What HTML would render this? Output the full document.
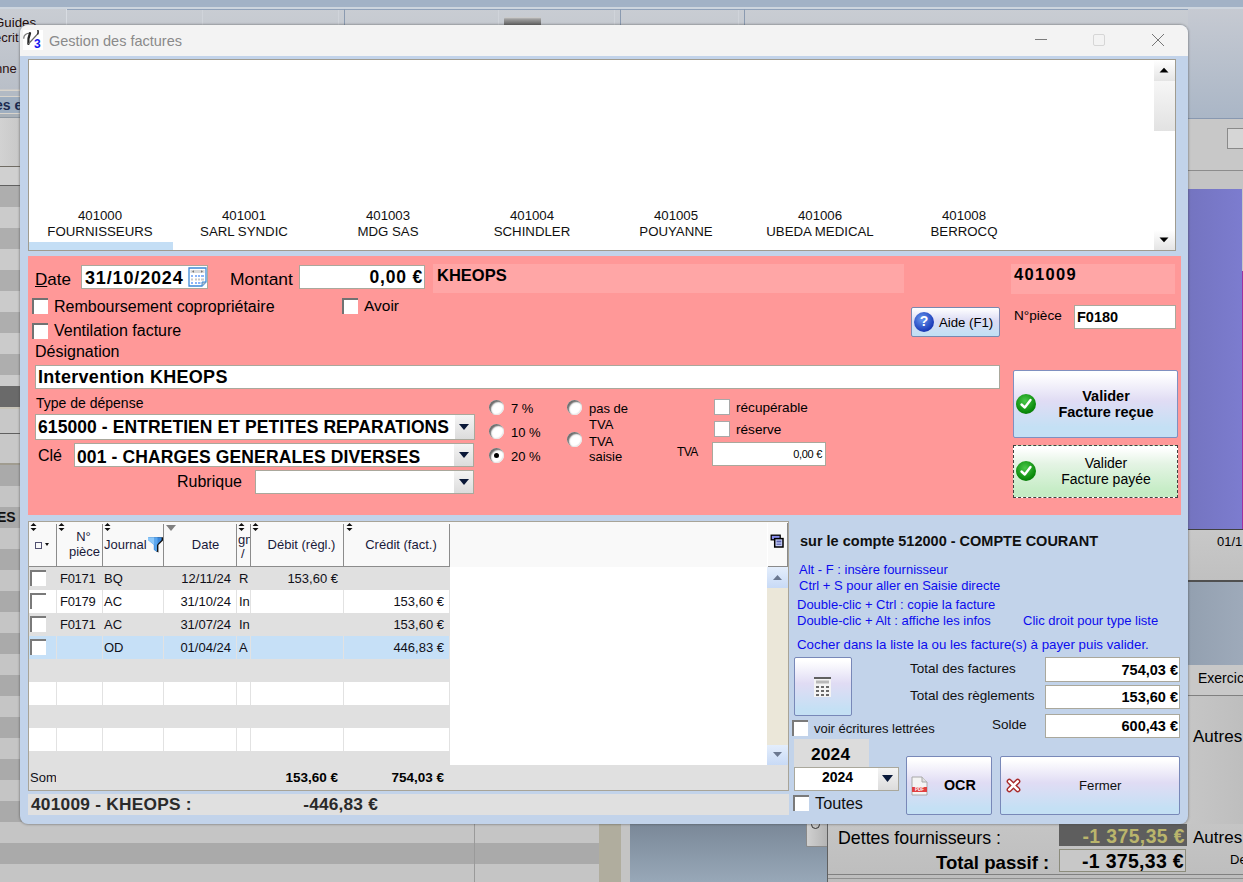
<!DOCTYPE html>
<html><head><meta charset="utf-8">
<style>
*{box-sizing:border-box;margin:0;padding:0}
html,body{width:1243px;height:882px;overflow:hidden;background:#c8c8c8;font-family:"Liberation Sans",sans-serif;color:#000}
.a{position:absolute}
.t{position:absolute;white-space:nowrap;line-height:1}
</style></head><body>
<!-- ===== BACKGROUND ===== -->
<div id="bg">
  <!-- top band -->
  <div class="a" style="left:0;top:0;width:1243px;height:7px;background:#a2b2c6"></div>
  <div class="a" style="left:0;top:7px;width:1243px;height:2px;background:#cdd5de"></div>
  <div class="a" style="left:0;top:9px;width:1243px;height:80px;background:linear-gradient(#c9cdd3,#b9bfc8)"></div>
  <!-- toolbar separators -->
  <div class="a" style="left:66px;top:9px;width:1177px;height:1px;background:#90a2ba"></div>
  <div class="a" style="left:66px;top:9px;width:1px;height:16px;background:#d8dce2"></div>
  <div class="a" style="left:202px;top:10px;width:1px;height:15px;background:#d0d4da"></div>
  <div class="a" style="left:338px;top:10px;width:1px;height:15px;background:#d0d4da"></div>
  <div class="a" style="left:344px;top:9px;width:1px;height:16px;background:#8a9ab0"></div>
  <div class="a" style="left:498px;top:10px;width:1px;height:15px;background:#d0d4da"></div>
  <div class="a" style="left:614px;top:10px;width:1px;height:15px;background:#d0d4da"></div>
  <div class="a" style="left:620px;top:9px;width:1px;height:16px;background:#8a9ab0"></div>
  <div class="a" style="left:738px;top:10px;width:1px;height:15px;background:#d0d4da"></div>
  <div class="a" style="left:744px;top:9px;width:1px;height:16px;background:#8a9ab0"></div>
  <div class="a" style="left:504px;top:17px;width:37px;height:9px;background:linear-gradient(#d8d8d8 0,#a0a0a0 2px,#7c7c7c 60%,#606060);border-radius:2px 1px 0 0"></div>
  <!-- left strip -->
  <div class="t" style="left:-6px;top:16px;font-size:13.3px;color:#200a0a">Guides</div>
  <div class="t" style="left:-6px;top:31px;font-size:13px;color:#2a1010">écrit</div>
  <div class="t" style="left:-5px;top:62px;font-size:13px;color:#2a1010">nne</div>
  <div class="a" style="left:0;top:90px;width:20px;height:1px;background:#d8d4cc"></div>
  <div class="a" style="left:0;top:91px;width:20px;height:5px;background:#b2bac4"></div>
  <div class="a" style="left:0;top:96px;width:20px;height:1px;background:#d8d4cc"></div>
  <div class="a" style="left:0;top:97px;width:20px;height:16px;background:#9eaec0"></div>
  <div class="t" style="left:-5px;top:98px;font-size:14px;font-weight:bold;color:#1a2a50">es e</div>
  <div class="a" style="left:0;top:113px;width:20px;height:1px;background:#d8d4cc"></div>
  <div class="a" style="left:0;top:114px;width:20px;height:3px;background:#a8b0b8"></div>
  <div class="a" style="left:0;top:117px;width:20px;height:1px;background:#8e98a2"></div>
  <div class="a" style="left:0;top:118px;width:20px;height:48px;background:linear-gradient(90deg,#d2d2d2,#c8c8c8)"></div>
  <div class="a" style="left:0;top:166px;width:20px;height:1px;background:#706c64"></div>
  <div class="a" style="left:0;top:167px;width:20px;height:18px;background:#d0d0d0"></div>
  <div class="a" style="left:0;top:185px;width:20px;height:1px;background:#606060"></div>
  <div id="stripesL" class="a" style="left:0;top:186px;width:20px;height:200px;background:repeating-linear-gradient(#aeaeae 0 21px,#cbcbcb 21px 42px)"></div>
  <div class="a" style="left:0;top:386px;width:20px;height:21px;background:#6a6a6a"></div>
  <div class="a" style="left:0;top:407px;width:20px;height:2px;background:#c8c4b8"></div>
  <div class="a" style="left:0;top:409px;width:20px;height:24px;background:#c8c8c8"></div>
  <div class="a" style="left:0;top:433px;width:20px;height:1px;background:#606060"></div>
  <div class="a" style="left:0;top:434px;width:20px;height:29px;background:#c8c8c8"></div>
  <div class="a" style="left:0;top:463px;width:20px;height:2px;background:#a09c90"></div>
  <div class="a" style="left:0;top:465px;width:600px;height:417px;background:repeating-linear-gradient(#aaaaaa 0 21px,#c5c5c5 21px 42px)"></div>
  <div class="t" style="left:-3px;top:510px;font-size:14px;font-weight:bold;color:#101010">ES</div>
  <div class="a" style="left:474px;top:824px;width:1px;height:58px;background:#9a9a9a"></div>
  <div class="a" style="left:599px;top:824px;width:22px;height:58px;background:#b0ad9e"></div>
  <div class="a" style="left:621px;top:824px;width:9px;height:58px;background:#c4c4c4"></div>
  <div class="a" style="left:630px;top:824px;width:197px;height:58px;background:linear-gradient(#7a8898,#98a8b8)"></div>
  <div class="a" style="left:806px;top:812px;width:21px;height:35px;background:linear-gradient(90deg,#d0d0d0,#b4b4b4);border-left:1px solid #8a8a8a;border-bottom:1px solid #8a8a8a;border-radius:0 0 0 2px"></div>
  <div class="a" style="left:811px;top:820px;width:9px;height:9px;border:1.3px solid #303030;border-radius:50%"></div>
  <div class="a" style="left:827px;top:815px;width:416px;height:67px;background:linear-gradient(#c6c6c6,#bdbdbd);border-left:1px solid #606060"></div>
  <div class="t" style="left:838px;top:829.5px;font-size:17.8px">Dettes fournisseurs :</div>
  <div class="t" style="left:936px;top:854px;font-size:18.6px;font-weight:bold">Total passif :</div>
  <div class="a" style="left:1059px;top:824px;width:128px;height:22px;background:#5e5e5e"></div>
  <div class="t" style="left:1059px;top:826.5px;width:126px;text-align:right;font-size:19.3px;font-weight:bold;letter-spacing:0.45px;color:#bab56c">-1 375,35 €</div>
  <div class="a" style="left:1059px;top:849px;width:127px;height:23px;border:1px solid #8c8c7c;background:#c8c8c8"></div>
  <div class="t" style="left:1059px;top:852px;width:125px;text-align:right;font-size:19.5px;font-weight:bold;letter-spacing:0.3px">-1 375,33 €</div>
  <div class="a" style="left:828px;top:874px;width:415px;height:1px;background:#808080"></div>
  <div class="a" style="left:828px;top:878px;width:415px;height:1px;background:#909090"></div>
  <div class="t" style="left:1193px;top:829px;font-size:17px">Autres</div>
  <div class="t" style="left:1230px;top:853px;font-size:13px">De</div>
  <!-- right strip -->
  <div class="a" style="left:1188px;top:9px;width:55px;height:109px;background:linear-gradient(#c6cad2,#aab6c6)"></div>
  <div class="a" style="left:1188px;top:118px;width:55px;height:1px;background:#8898b0"></div>
  <div class="a" style="left:1188px;top:119px;width:55px;height:51px;background:#c8c8c8"></div>
  <div class="a" style="left:1227px;top:128px;width:20px;height:21px;background:#d6d6d6;border:1px solid #8a8a8a"></div>
  <div class="a" style="left:1188px;top:170px;width:55px;height:1px;background:#8c8c8c"></div>
  <div class="a" style="left:1188px;top:171px;width:55px;height:18px;background:#c4c4c4"></div>
  <div class="a" style="left:1188px;top:189px;width:54px;height:340px;background:linear-gradient(90deg,#7474c0,#7c7ccf)"></div>
  <div class="a" style="left:1242px;top:271px;width:1px;height:258px;background:#a030a0"></div>
  <div class="a" style="left:1188px;top:529px;width:55px;height:1px;background:#404040"></div>
  <div class="a" style="left:1188px;top:530px;width:55px;height:51px;background:linear-gradient(#c8c8c8,#c0c0c0)"></div>
  <div class="t" style="left:1217px;top:535px;font-size:13px">01/1</div>
  <div class="a" style="left:1188px;top:580px;width:55px;height:2px;background:#505050"></div>
  <div class="a" style="left:1188px;top:582px;width:55px;height:83px;background:linear-gradient(90deg,#93a0b0,#9eaaba)"></div>
  <div class="a" style="left:1188px;top:665px;width:55px;height:30px;background:#c8c8c8"></div>
  <div class="t" style="left:1198px;top:671px;font-size:14px">Exercic</div>
  <div class="a" style="left:1188px;top:695px;width:55px;height:1px;background:#808080"></div>
  <div class="a" style="left:1188px;top:696px;width:55px;height:128px;background:linear-gradient(90deg,#c6c6c6,#bebebe)"></div>
  <div class="t" style="left:1193px;top:728px;font-size:17px">Autres</div>
</div>

<!-- ===== WINDOW ===== -->
<div id="win" class="a" style="left:20px;top:25px;width:1168px;height:799px;background:#c2d3ea;border-radius:8px;overflow:hidden;box-shadow:0 0 2px 1px rgba(60,60,60,.35)">
<div class="a" style="left:-20px;top:-25px;width:1243px;height:882px">
  <!-- title bar -->
  <div class="a" style="left:20px;top:25px;width:1168px;height:31px;background:#f3f3f3"></div>
  <div class="a" style="left:23px;top:30px;width:20px;height:20px;background:#fff"></div>
  <svg class="a" style="left:23px;top:30px" width="20" height="20" viewBox="0 0 20 20">
    <path d="M0.8 8.2C0.6 5.5 3.5 3 7 3.2" fill="none" stroke="#7a7a7a" stroke-width="1.3" stroke-linecap="round"/>
    <path d="M7 3.3C5.6 6.5 5 10 5.4 13.8" fill="none" stroke="#262626" stroke-width="2.3" stroke-linecap="round"/>
    <path d="M5.6 13.6C8.5 10.5 12.5 6.5 14.8 3.6" fill="none" stroke="#6a6a6a" stroke-width="1.3" stroke-linecap="round"/>
    <path d="M14.8 3.8C15.3 2.5 15.1 1.2 14.9 0.6" fill="none" stroke="#3a3a3a" stroke-width="1.7" stroke-linecap="round"/>
    <text x="11.1" y="17.7" font-family="Liberation Sans" font-weight="bold" font-size="12" fill="#1414f0">3</text>
  </svg>
  <div class="t" style="left:49px;top:34px;font-size:14.5px;color:#8a8a8a">Gestion des factures</div>
  <div class="a" style="left:1035px;top:39px;width:12px;height:1px;background:#7c7c7c"></div>
  <div class="a" style="left:1093px;top:34px;width:12px;height:12px;border:1px solid #d6d6d6;border-radius:2px"></div>
  <svg class="a" style="left:1151px;top:33px" width="14" height="14" viewBox="0 0 14 14"><path d="M1 1L13 13M13 1L1 13" stroke="#767676" stroke-width="1"/></svg>

  <!-- list view -->
  <div class="a" style="left:28px;top:59px;width:1148px;height:192px;background:#fff;border:1px solid #a09c90"></div>
  <div class="a" style="left:29px;top:242px;width:144px;height:8px;background:#c4def5"></div>
  <div id="items"><div class="t" style="left:28px;top:209px;width:144px;text-align:center;font-size:13.25px;color:#101010">401000</div><div class="t" style="left:28px;top:225px;width:144px;text-align:center;font-size:13.25px;color:#101010">FOURNISSEURS</div>
<div class="t" style="left:172px;top:209px;width:144px;text-align:center;font-size:13.25px;color:#101010">401001</div><div class="t" style="left:172px;top:225px;width:144px;text-align:center;font-size:13.25px;color:#101010">SARL SYNDIC</div>
<div class="t" style="left:316px;top:209px;width:144px;text-align:center;font-size:13.25px;color:#101010">401003</div><div class="t" style="left:316px;top:225px;width:144px;text-align:center;font-size:13.25px;color:#101010">MDG SAS</div>
<div class="t" style="left:460px;top:209px;width:144px;text-align:center;font-size:13.25px;color:#101010">401004</div><div class="t" style="left:460px;top:225px;width:144px;text-align:center;font-size:13.25px;color:#101010">SCHINDLER</div>
<div class="t" style="left:604px;top:209px;width:144px;text-align:center;font-size:13.25px;color:#101010">401005</div><div class="t" style="left:604px;top:225px;width:144px;text-align:center;font-size:13.25px;color:#101010">POUYANNE</div>
<div class="t" style="left:748px;top:209px;width:144px;text-align:center;font-size:13.25px;color:#101010">401006</div><div class="t" style="left:748px;top:225px;width:144px;text-align:center;font-size:13.25px;color:#101010">UBEDA MEDICAL</div>
<div class="t" style="left:892px;top:209px;width:144px;text-align:center;font-size:13.25px;color:#101010">401008</div><div class="t" style="left:892px;top:225px;width:144px;text-align:center;font-size:13.25px;color:#101010">BERROCQ</div>
</div>
  <!-- list scrollbar -->
  <div class="a" style="left:1154px;top:60px;width:21px;height:21px;background:linear-gradient(#fff,#e4e4e4)"></div>
  <svg class="a" style="left:1159px;top:67px" width="10" height="6" viewBox="0 0 10 6"><path d="M0.5 5.5L5 0.8L9.5 5.5Z" fill="#000"/></svg>
  <div class="a" style="left:1154px;top:81px;width:21px;height:50px;background:linear-gradient(#f6f6f6,#e2e2e2)"></div>
  <div class="a" style="left:1154px;top:230px;width:21px;height:20px;background:linear-gradient(#fff,#e4e4e4)"></div>
  <svg class="a" style="left:1159px;top:237px" width="10" height="6" viewBox="0 0 10 6"><path d="M0.5 0.5L5 5.2L9.5 0.5Z" fill="#000"/></svg>

  <!-- pink panel -->
  <div class="a" style="left:28px;top:256px;width:1153px;height:259px;background:#ff9898"></div>
  <div id="pink"><div class="t" style="left:35px;top:271px;font-size:17px;"><u>D</u>ate</div><div class="a" style="left:81px;top:265px;width:127px;height:24px;background:#fff;border:1px solid #aaa89c;"></div><div class="t" style="left:85px;top:269px;font-size:18px;font-weight:bold;letter-spacing:0.85px">31/10/2024</div><svg class="a" style="left:188px;top:267px" width="19" height="20" viewBox="0 0 19 20">
<path d="M1 1H18V15L14 19H1Z" fill="#fff" stroke="#3d8ad8" stroke-width="1.3"/>
<rect x="2.5" y="3" width="14" height="3" fill="#d8d8d8"/>
<path d="M4 4.5L6 3.2V5.8Z M15 4.5L13 3.2V5.8Z" fill="#777"/>
<g fill="#8ab4f8"><rect x="3" y="8" width="2" height="2"/><rect x="7" y="8" width="2" height="2"/><rect x="10" y="8" width="2" height="2"/><rect x="13" y="8" width="3" height="2"/>
<rect x="3" y="15" width="2" height="2"/><rect x="7" y="15" width="2" height="2"/><rect x="10" y="15" width="2.5" height="2"/></g>
<g fill="#c8c8c8"><rect x="3" y="11.5" width="2" height="2"/><rect x="7" y="11.5" width="2" height="2"/><rect x="10" y="11.5" width="2" height="2"/><rect x="13" y="11.5" width="3" height="2"/></g>
<path d="M14 19L14 15L18 15" fill="#c0c0c0" stroke="#3d8ad8" stroke-width="1"/>
</svg><div class="t" style="left:230px;top:271px;font-size:17.4px;">Montant</div><div class="a" style="left:299px;top:265px;width:126px;height:24px;background:#fff;border:1px solid #aaa89c;"></div><div class="t" style="left:299px;top:269px;font-size:17.5px;width:124px;text-align:right;font-weight:bold;letter-spacing:0.8px">0,00 €</div><div class="a" style="left:433px;top:264px;width:471px;height:29px;background:#ffa6a6"></div><div class="t" style="left:437px;top:267px;font-size:16.5px;font-weight:bold">KHEOPS</div><div class="a" style="left:1011px;top:264px;width:164px;height:30px;background:#ffa6a6"></div><div class="t" style="left:1014px;top:266px;font-size:16.5px;font-weight:bold;letter-spacing:1.3px">401009</div><div class="a" style="left:32px;top:298px;width:16px;height:16px;background:#fff;border-top:2px solid #707272;border-left:2px solid #707272"></div><div class="t" style="left:54px;top:299px;font-size:16px;">Remboursement copropriétaire</div><div class="a" style="left:342px;top:298px;width:16px;height:16px;background:#fff;border-top:2px solid #707272;border-left:2px solid #707272"></div><div class="t" style="left:364px;top:298px;font-size:15.5px;">Avoir</div><div class="a" style="left:32px;top:323px;width:16px;height:16px;background:#fff;border-top:2px solid #707272;border-left:2px solid #707272"></div><div class="t" style="left:54px;top:323px;font-size:16px;">Ventilation facture</div><div class="t" style="left:35px;top:344px;font-size:16px;">Désignation</div><div class="a" style="left:35px;top:365px;width:965px;height:24px;background:#fff;border:1px solid #aaa89c;"></div><div class="t" style="left:38px;top:368px;font-size:18px;font-weight:bold;letter-spacing:0.3px">Intervention KHEOPS</div><div class="a" style="left:911px;top:307px;width:89px;height:30px;border:1px solid #7888b0;border-radius:2px;background:linear-gradient(#ffffff,#dcdcf4 45%,#c0e0f4)"></div><div class="a" style="left:914px;top:312px;width:20px;height:20px;border-radius:50%;background:radial-gradient(circle at 40% 35%,#6a9af0,#1a3ab8 70%,#10288a)"></div><div class="t" style="left:914px;top:314px;font-size:14px;width:20px;text-align:center;font-weight:bold;color:#fff">?</div><div class="t" style="left:939px;top:316px;font-size:13.2px;">Aide (F1)</div><div class="t" style="left:1014px;top:309px;font-size:13.6px;">N°pièce</div><div class="a" style="left:1074px;top:305px;width:102px;height:24px;background:#fff;border:1px solid #aaa89c;"></div><div class="t" style="left:1077px;top:310px;font-size:14.5px;font-weight:bold">F0180</div><div class="a" style="left:1013px;top:370px;width:165px;height:68px;border:1px solid #8090c0;border-radius:2px;background:linear-gradient(#ffffff 5%,#e0dcf4 45%,#c4e0f4 85%)"></div><div class="a" style="left:1016px;top:394px;width:20px;height:20px;border-radius:50%;background:radial-gradient(circle at 45% 35%,#4ac84a,#0a8a0a 65%,#066006)"></div><svg class="a" style="left:1016px;top:394px" width="20" height="20" viewBox="0 0 20 20"><path d="M5.5 10.5L8.8 13.5L14.5 6" fill="none" stroke="#fff" stroke-width="2.4" stroke-linecap="round" stroke-linejoin="round"/></svg><div class="t" style="left:1013px;top:389px;font-size:14.5px;width:186px;text-align:center;font-weight:bold">Valider</div><div class="t" style="left:1013px;top:405px;font-size:14.5px;width:186px;text-align:center;font-weight:bold">Facture reçue</div><div class="a" style="left:1013px;top:445px;width:165px;height:53px;border:1px dashed #404040;background:linear-gradient(#ffffff 5%,#e4f4e4 35%,#c4ecc4 90%)"></div><div class="a" style="left:1016px;top:461px;width:20px;height:20px;border-radius:50%;background:radial-gradient(circle at 45% 35%,#4ac84a,#0a8a0a 65%,#066006)"></div><svg class="a" style="left:1016px;top:461px" width="20" height="20" viewBox="0 0 20 20"><path d="M5.5 10.5L8.8 13.5L14.5 6" fill="none" stroke="#fff" stroke-width="2.4" stroke-linecap="round" stroke-linejoin="round"/></svg><div class="t" style="left:1013px;top:456px;font-size:14px;width:186px;text-align:center">Valider</div><div class="t" style="left:1013px;top:472px;font-size:14px;width:186px;text-align:center">Facture payée</div><div class="t" style="left:36px;top:396px;font-size:14px;">Type de dépense</div><div class="a" style="left:35px;top:414px;width:440px;height:26px;background:#fff;border:1px solid #aaa89c;"></div><div class="a" style="left:455px;top:415px;width:19px;height:24px;background:linear-gradient(#f4f4f4,#dcdcdc)"></div><div class="a" style="left:459px;top:424px;width:0;height:0;border-left:5.5px solid transparent;border-right:5.5px solid transparent;border-top:6px solid #0a1838"></div><div class="t" style="left:38px;top:419px;font-size:17.5px;font-weight:bold;letter-spacing:0.08px">615000 - ENTRETIEN ET PETITES REPARATIONS</div><div class="t" style="left:38px;top:448px;font-size:16px;">Clé</div><div class="a" style="left:74px;top:443px;width:400px;height:24px;background:#fff;border:1px solid #aaa89c;"></div><div class="a" style="left:454px;top:444px;width:19px;height:22px;background:linear-gradient(#f4f4f4,#dcdcdc)"></div><div class="a" style="left:459px;top:452px;width:0;height:0;border-left:5.5px solid transparent;border-right:5.5px solid transparent;border-top:6px solid #0a1838"></div><div class="t" style="left:77px;top:449px;font-size:17.5px;font-weight:bold;letter-spacing:0.12px">001 - CHARGES GENERALES DIVERSES</div><div class="t" style="left:177px;top:474px;font-size:16px;">Rubrique</div><div class="a" style="left:255px;top:470px;width:219px;height:24px;background:#fff;border:1px solid #aaa89c;"></div><div class="a" style="left:454px;top:471px;width:19px;height:22px;background:linear-gradient(#f4f4f4,#dcdcdc)"></div><div class="a" style="left:459px;top:479px;width:0;height:0;border-left:5.5px solid transparent;border-right:5.5px solid transparent;border-top:6px solid #0a1838"></div><div class="a" style="left:489px;top:400px;width:15px;height:15px;border-radius:50%;background:#fff;box-shadow:inset 2px 2px 1.5px #6e6e6e,inset -1px -1px 1px #e8e8e8"></div><div class="t" style="left:511px;top:402px;font-size:13px;">7 %</div><div class="a" style="left:489px;top:424px;width:15px;height:15px;border-radius:50%;background:#fff;box-shadow:inset 2px 2px 1.5px #6e6e6e,inset -1px -1px 1px #e8e8e8"></div><div class="t" style="left:511px;top:426px;font-size:13px;">10 %</div><div class="a" style="left:489px;top:448px;width:15px;height:15px;border-radius:50%;background:#fff;box-shadow:inset 2px 2px 1.5px #6e6e6e,inset -1px -1px 1px #e8e8e8"></div><div class="a" style="left:494px;top:453px;width:5px;height:5px;border-radius:50%;background:#000"></div><div class="t" style="left:511px;top:450px;font-size:13px;">20 %</div><div class="a" style="left:567px;top:400px;width:15px;height:15px;border-radius:50%;background:#fff;box-shadow:inset 2px 2px 1.5px #6e6e6e,inset -1px -1px 1px #e8e8e8"></div><div class="t" style="left:589px;top:402px;font-size:13px;">pas de</div><div class="t" style="left:589px;top:418px;font-size:13px;">TVA</div><div class="a" style="left:567px;top:432px;width:15px;height:15px;border-radius:50%;background:#fff;box-shadow:inset 2px 2px 1.5px #6e6e6e,inset -1px -1px 1px #e8e8e8"></div><div class="t" style="left:589px;top:435px;font-size:13px;">TVA</div><div class="t" style="left:589px;top:450px;font-size:13px;">saisie</div><div class="a" style="left:714px;top:399px;width:16px;height:16px;background:#fff;border:1px solid #a8a8a8"></div><div class="t" style="left:736px;top:401px;font-size:13.6px;">récupérable</div><div class="a" style="left:714px;top:421px;width:16px;height:16px;background:#fff;border:1px solid #a8a8a8"></div><div class="t" style="left:736px;top:423px;font-size:13.6px;">réserve</div><div class="t" style="left:677px;top:446px;font-size:12px;letter-spacing:-0.6px">TVA</div><div class="a" style="left:712px;top:442px;width:114px;height:24px;background:#fff;border:1px solid #aaa89c;"></div><div class="t" style="left:712px;top:449px;font-size:11px;width:112px;text-align:right;padding-right:2px;letter-spacing:-0.3px">0,00 €</div></div>

  <!-- grid -->
  <div id="grid"><div class="a" style="left:28px;top:521px;width:761px;height:270px;background:#fff;border:1px solid #a8a498"></div><div class="a" style="left:29px;top:522px;width:759px;height:45px;background:#f9f9f9"></div><div class="a" style="left:29px;top:566px;width:28px;height:1px;background:#8c8c8c"></div><div class="a" style="left:56px;top:524px;width:1px;height:43px;background:#8c8c8c"></div><div class="a" style="left:57px;top:566px;width:46px;height:1px;background:#8c8c8c"></div><div class="a" style="left:102px;top:524px;width:1px;height:43px;background:#8c8c8c"></div><div class="a" style="left:103px;top:566px;width:61px;height:1px;background:#8c8c8c"></div><div class="a" style="left:163px;top:524px;width:1px;height:43px;background:#8c8c8c"></div><div class="a" style="left:164px;top:566px;width:73px;height:1px;background:#8c8c8c"></div><div class="a" style="left:236px;top:524px;width:1px;height:43px;background:#8c8c8c"></div><div class="a" style="left:237px;top:566px;width:14px;height:1px;background:#8c8c8c"></div><div class="a" style="left:250px;top:524px;width:1px;height:43px;background:#8c8c8c"></div><div class="a" style="left:251px;top:566px;width:93px;height:1px;background:#8c8c8c"></div><div class="a" style="left:343px;top:524px;width:1px;height:43px;background:#8c8c8c"></div><div class="a" style="left:344px;top:566px;width:106px;height:1px;background:#8c8c8c"></div><div class="a" style="left:449px;top:524px;width:1px;height:43px;background:#8c8c8c"></div><svg class="a" style="left:30px;top:523px" width="7" height="8" viewBox="0 0 7 8"><path d="M3.5 0L6.5 3H0.5Z M3.5 8L6.5 5H0.5Z" fill="#101010"/></svg><svg class="a" style="left:58px;top:523px" width="7" height="8" viewBox="0 0 7 8"><path d="M3.5 0L6.5 3H0.5Z M3.5 8L6.5 5H0.5Z" fill="#101010"/></svg><svg class="a" style="left:104px;top:523px" width="7" height="8" viewBox="0 0 7 8"><path d="M3.5 0L6.5 3H0.5Z M3.5 8L6.5 5H0.5Z" fill="#101010"/></svg><svg class="a" style="left:238px;top:523px" width="7" height="8" viewBox="0 0 7 8"><path d="M3.5 0L6.5 3H0.5Z M3.5 8L6.5 5H0.5Z" fill="#101010"/></svg><svg class="a" style="left:252px;top:523px" width="7" height="8" viewBox="0 0 7 8"><path d="M3.5 0L6.5 3H0.5Z M3.5 8L6.5 5H0.5Z" fill="#101010"/></svg><svg class="a" style="left:346px;top:523px" width="7" height="8" viewBox="0 0 7 8"><path d="M3.5 0L6.5 3H0.5Z M3.5 8L6.5 5H0.5Z" fill="#101010"/></svg><svg class="a" style="left:166px;top:525px" width="10" height="6" viewBox="0 0 10 6"><path d="M0 0H10L5 6Z" fill="#808080"/></svg><div class="a" style="left:35px;top:542px;width:7px;height:7px;border:1px solid #505070"></div><svg class="a" style="left:45px;top:543px" width="4" height="3" viewBox="0 0 4 3"><path d="M0 0H4L2 3Z" fill="#101010"/></svg><div class="t" style="left:61px;top:530px;font-size:13px;width:45px;text-align:center;color:#1a1a3a">N°</div><div class="t" style="left:57px;top:545px;font-size:13px;width:45px;text-align:right;padding-right:2px;color:#1a1a3a">pièce</div><div class="t" style="left:104px;top:538px;font-size:13px;color:#1a1a3a">Journal</div><svg class="a" style="left:148px;top:537px" width="15" height="16" viewBox="0 0 15 16"><path d="M1.2 0.3H15V3.4L10.4 8V15.5L7.2 13.8V8L1.2 3.4Z" fill="#111"/><path d="M0 0.3H13.6V3L8.9 7.8V14.4L5.8 12.8V7.8L0 3Z" fill="#3a88dc"/><path d="M0 0.3H6.5V7.5L5.8 7.8L0 3Z" fill="#8cc8fa"/><path d="M6.5 0.3H9.5V7.2L8.9 7.8V14.4L6.5 13.2Z" fill="#5aa6ee"/></svg><div class="t" style="left:164px;top:538px;font-size:13px;width:73px;text-align:center;padding-left:10px;color:#1a1a3a">Date</div><div class="a" style="left:237px;top:533px;width:13px;height:27px;overflow:hidden"><div class="t" style="left:1px;top:0;font-size:13px;color:#1a1a3a">gn</div><div class="t" style="left:4px;top:14px;font-size:13px;color:#1a1a3a">/</div></div><div class="t" style="left:251px;top:538px;font-size:13px;width:93px;text-align:center;padding-left:8px;color:#1a1a3a">Débit (règl.)</div><div class="t" style="left:344px;top:538px;font-size:13px;width:106px;text-align:center;padding-left:8px;color:#1a1a3a">Crédit (fact.)</div><div class="a" style="left:787px;top:523px;width:1px;height:44px;background:#8a8a8a"></div><div class="a" style="left:768px;top:566px;width:20px;height:1px;background:#8a8a8a"></div><div class="a" style="left:767px;top:523px;width:1px;height:43px;background:#fff"></div><svg class="a" style="left:770px;top:534px" width="14" height="14" viewBox="0 0 14 14"><rect x="1.2" y="1.2" width="9" height="4.6" fill="#8a90f0" stroke="#000" stroke-width="1.3"/><rect x="4.7" y="4.6" width="8.3" height="8.4" fill="#c8d0f8" stroke="#000" stroke-width="1.5"/><rect x="6.5" y="6.6" width="4.8" height="1.8" fill="#5a62b0"/><rect x="6.5" y="9.6" width="4.8" height="1.2" fill="#5a62b0"/></svg><div class="a" style="left:29px;top:567px;width:421px;height:23px;background:#e0e0e0"></div><div class="a" style="left:30px;top:570px;width:16px;height:16px;background:#fff;border-top:2px solid #7a7a7a;border-left:2px solid #7a7a7a"></div><div class="t" style="left:60px;top:572px;font-size:13px;letter-spacing:-0.3px;color:#101018">F0171</div><div class="t" style="left:104px;top:572px;font-size:13px;color:#101018">BQ</div><div class="t" style="left:164px;top:572px;font-size:13px;width:67px;text-align:right;color:#101018">12/11/24</div><div class="a" style="left:237px;top:567px;width:13px;height:20px;overflow:hidden"><div class="t" style="left:2px;top:5px;font-size:13px;color:#101018">R</div></div><div class="t" style="left:251px;top:572px;font-size:13px;width:87px;text-align:right;color:#101018">153,60 €</div><div class="a" style="left:29px;top:590px;width:421px;height:23px;background:#ffffff"></div><div class="a" style="left:56px;top:590px;width:1px;height:23px;background:#e2e2e2"></div><div class="a" style="left:102px;top:590px;width:1px;height:23px;background:#e2e2e2"></div><div class="a" style="left:163px;top:590px;width:1px;height:23px;background:#e2e2e2"></div><div class="a" style="left:236px;top:590px;width:1px;height:23px;background:#e2e2e2"></div><div class="a" style="left:250px;top:590px;width:1px;height:23px;background:#e2e2e2"></div><div class="a" style="left:343px;top:590px;width:1px;height:23px;background:#e2e2e2"></div><div class="a" style="left:449px;top:590px;width:1px;height:23px;background:#e2e2e2"></div><div class="a" style="left:30px;top:593px;width:16px;height:16px;background:#fff;border-top:2px solid #7a7a7a;border-left:2px solid #7a7a7a"></div><div class="t" style="left:60px;top:595px;font-size:13px;letter-spacing:-0.3px;color:#101018">F0179</div><div class="t" style="left:104px;top:595px;font-size:13px;color:#101018">AC</div><div class="t" style="left:164px;top:595px;font-size:13px;width:67px;text-align:right;color:#101018">31/10/24</div><div class="a" style="left:237px;top:590px;width:13px;height:20px;overflow:hidden"><div class="t" style="left:2px;top:5px;font-size:13px;color:#101018">In</div></div><div class="t" style="left:344px;top:595px;font-size:13px;width:100px;text-align:right;color:#101018">153,60 €</div><div class="a" style="left:29px;top:613px;width:421px;height:23px;background:#e0e0e0"></div><div class="a" style="left:30px;top:616px;width:16px;height:16px;background:#fff;border-top:2px solid #7a7a7a;border-left:2px solid #7a7a7a"></div><div class="t" style="left:60px;top:618px;font-size:13px;letter-spacing:-0.3px;color:#101018">F0171</div><div class="t" style="left:104px;top:618px;font-size:13px;color:#101018">AC</div><div class="t" style="left:164px;top:618px;font-size:13px;width:67px;text-align:right;color:#101018">31/07/24</div><div class="a" style="left:237px;top:613px;width:13px;height:20px;overflow:hidden"><div class="t" style="left:2px;top:5px;font-size:13px;color:#101018">In</div></div><div class="t" style="left:344px;top:618px;font-size:13px;width:100px;text-align:right;color:#101018">153,60 €</div><div class="a" style="left:29px;top:636px;width:421px;height:23px;background:#c6e0f7"></div><div class="a" style="left:56px;top:636px;width:1px;height:23px;background:#e2e2e2"></div><div class="a" style="left:102px;top:636px;width:1px;height:23px;background:#e2e2e2"></div><div class="a" style="left:163px;top:636px;width:1px;height:23px;background:#e2e2e2"></div><div class="a" style="left:236px;top:636px;width:1px;height:23px;background:#e2e2e2"></div><div class="a" style="left:250px;top:636px;width:1px;height:23px;background:#e2e2e2"></div><div class="a" style="left:343px;top:636px;width:1px;height:23px;background:#e2e2e2"></div><div class="a" style="left:449px;top:636px;width:1px;height:23px;background:#e2e2e2"></div><div class="a" style="left:30px;top:639px;width:16px;height:16px;background:#fff;border-top:2px solid #7a7a7a;border-left:2px solid #7a7a7a"></div><div class="t" style="left:104px;top:641px;font-size:13px;color:#101018">OD</div><div class="t" style="left:164px;top:641px;font-size:13px;width:67px;text-align:right;color:#101018">01/04/24</div><div class="a" style="left:237px;top:636px;width:13px;height:20px;overflow:hidden"><div class="t" style="left:2px;top:5px;font-size:13px;color:#101018">A</div></div><div class="t" style="left:344px;top:641px;font-size:13px;width:100px;text-align:right;color:#101018">446,83 €</div><div class="a" style="left:29px;top:659px;width:421px;height:23px;background:#e0e0e0"></div><div class="a" style="left:29px;top:682px;width:421px;height:23px;background:#ffffff"></div><div class="a" style="left:56px;top:682px;width:1px;height:23px;background:#e2e2e2"></div><div class="a" style="left:102px;top:682px;width:1px;height:23px;background:#e2e2e2"></div><div class="a" style="left:163px;top:682px;width:1px;height:23px;background:#e2e2e2"></div><div class="a" style="left:236px;top:682px;width:1px;height:23px;background:#e2e2e2"></div><div class="a" style="left:250px;top:682px;width:1px;height:23px;background:#e2e2e2"></div><div class="a" style="left:343px;top:682px;width:1px;height:23px;background:#e2e2e2"></div><div class="a" style="left:449px;top:682px;width:1px;height:23px;background:#e2e2e2"></div><div class="a" style="left:29px;top:705px;width:421px;height:23px;background:#e0e0e0"></div><div class="a" style="left:29px;top:728px;width:421px;height:23px;background:#ffffff"></div><div class="a" style="left:56px;top:728px;width:1px;height:23px;background:#e2e2e2"></div><div class="a" style="left:102px;top:728px;width:1px;height:23px;background:#e2e2e2"></div><div class="a" style="left:163px;top:728px;width:1px;height:23px;background:#e2e2e2"></div><div class="a" style="left:236px;top:728px;width:1px;height:23px;background:#e2e2e2"></div><div class="a" style="left:250px;top:728px;width:1px;height:23px;background:#e2e2e2"></div><div class="a" style="left:343px;top:728px;width:1px;height:23px;background:#e2e2e2"></div><div class="a" style="left:449px;top:728px;width:1px;height:23px;background:#e2e2e2"></div><div class="a" style="left:29px;top:751px;width:421px;height:14px;background:#e0e0e0"></div><div class="a" style="left:767px;top:567px;width:21px;height:198px;background:#ebe7d9"></div><div class="a" style="left:767px;top:567px;width:21px;height:21px;background:linear-gradient(#e4eefc,#c8daf6)"></div><svg class="a" style="left:773px;top:575px" width="9" height="5" viewBox="0 0 9 5"><path d="M0 5L4.5 0L9 5Z" fill="#6b7890"/></svg><div class="a" style="left:767px;top:745px;width:21px;height:20px;background:linear-gradient(#e4eefc,#c8daf6)"></div><svg class="a" style="left:773px;top:752px" width="9" height="5" viewBox="0 0 9 5"><path d="M0 0L4.5 5L9 0Z" fill="#6b7890"/></svg><div class="a" style="left:29px;top:765px;width:759px;height:25px;background:#e0e0e0"></div><div class="a" style="left:29px;top:765px;width:27px;height:25px;overflow:hidden"><div class="t" style="left:1px;top:6px;font-size:13px;color:#101018">Somme</div></div><div class="t" style="left:251px;top:771px;font-size:13.5px;width:87px;text-align:right;font-weight:bold">153,60 €</div><div class="t" style="left:344px;top:771px;font-size:13.5px;width:100px;text-align:right;font-weight:bold">754,03 €</div><div class="a" style="left:28px;top:794px;width:761px;height:21px;background:#e0e0e0"></div><div class="t" style="left:31px;top:796px;font-size:17.3px;font-weight:bold;color:#2a2a2a;letter-spacing:0.25px">401009 - KHEOPS :</div><div class="t" style="left:250px;top:796px;font-size:17.3px;width:128px;text-align:right;font-weight:bold;color:#2a2a2a;letter-spacing:0.2px">-446,83 €</div></div>

  <!-- bottom right panel -->
  <div id="br"><div class="t" style="left:800px;top:534px;font-size:14.5px;font-weight:bold;color:#101010">sur le compte 512000 - COMPTE COURANT</div><div class="t" style="left:799px;top:563px;font-size:13px;color:#0c0cee">Alt - F : insère fournisseur</div><div class="t" style="left:799px;top:579px;font-size:13px;color:#0c0cee">Ctrl + S pour aller en Saisie directe</div><div class="t" style="left:797px;top:598px;font-size:13px;color:#0c0cee">Double-clic + Ctrl : copie la facture</div><div class="t" style="left:797px;top:614px;font-size:13px;color:#0c0cee">Double-clic + Alt : affiche les infos</div><div class="t" style="left:1023px;top:614px;font-size:13px;color:#0c0cee">Clic droit pour type liste</div><div class="t" style="left:797px;top:638px;font-size:13.3px;color:#0c0cee">Cocher dans la liste la ou les facture(s) à payer puis valider.</div><div class="a" style="left:794px;top:657px;width:58px;height:59px;border:1px solid #7888b8;border-radius:2px;background:linear-gradient(#ffffff 5%,#e0dcf4 45%,#c4e0f4 90%)"></div><svg class="a" style="left:814px;top:676px" width="17" height="22" viewBox="0 0 17 22"><rect x="0" y="1" width="17" height="20" fill="#f4f4f4"/><rect x="0" y="1" width="17" height="2" fill="#606060"/><rect x="2" y="4.5" width="13" height="3" fill="#b8b8b8"/><g fill="#6a6a6a"><rect x="2" y="10" width="3" height="2"/><rect x="7" y="10" width="3" height="2"/><rect x="12" y="10" width="3" height="2"/><rect x="2" y="14" width="3" height="2"/><rect x="7" y="14" width="3" height="2"/><rect x="12" y="14" width="3" height="2"/><rect x="2" y="18" width="3" height="2"/><rect x="7" y="18" width="3" height="2"/><rect x="12" y="18" width="3" height="2"/></g></svg><div class="t" style="left:910px;top:662px;font-size:13.5px;color:#101010">Total des factures</div><div class="t" style="left:910px;top:689px;font-size:13.5px;color:#101010">Total des règlements</div><div class="t" style="left:992px;top:718px;font-size:13.5px;color:#101010">Solde</div><div class="a" style="left:1045px;top:657px;width:135px;height:25px;background:#fff;border:1px solid #aaa89c;"></div><div class="t" style="left:1045px;top:663px;font-size:14.5px;width:133px;text-align:right;font-weight:bold">754,03 €</div><div class="a" style="left:1045px;top:685px;width:135px;height:24px;background:#fff;border:1px solid #aaa89c;"></div><div class="t" style="left:1045px;top:690px;font-size:14.5px;width:133px;text-align:right;font-weight:bold">153,60 €</div><div class="a" style="left:1045px;top:714px;width:135px;height:24px;background:#fff;border:1px solid #aaa89c;"></div><div class="t" style="left:1045px;top:719px;font-size:14.5px;width:133px;text-align:right;font-weight:bold">600,43 €</div><div class="a" style="left:792px;top:720px;width:16px;height:16px;background:#fff;border-top:2px solid #7a7a7a;border-left:2px solid #7a7a7a"></div><div class="t" style="left:814px;top:722px;font-size:13px;color:#101010">voir écritures lettrées</div><div class="a" style="left:794px;top:739px;width:75px;height:28px;background:#dcdcdc"></div><div class="t" style="left:811px;top:746px;font-size:17.3px;font-weight:bold;letter-spacing:0.2px">2024</div><div class="a" style="left:794px;top:767px;width:105px;height:24px;background:#fff;border:1px solid #aaa89c;"></div><div class="t" style="left:822px;top:770px;font-size:14px;font-weight:bold">2024</div><div class="a" style="left:878px;top:768px;width:20px;height:22px;background:linear-gradient(#f4f4f4,#dcdcdc)"></div><svg class="a" style="left:882px;top:775px" width="11" height="7" viewBox="0 0 11 7"><path d="M0 0H11L5.5 7Z" fill="#0a1a3a"/></svg><div class="a" style="left:793px;top:795px;width:16px;height:16px;background:#fff;border-top:2px solid #7a7a7a;border-left:2px solid #7a7a7a"></div><div class="t" style="left:815px;top:795px;font-size:16.3px;color:#101010">Toutes</div><div class="a" style="left:906px;top:756px;width:86px;height:59px;border:1px solid #7888b8;border-radius:2px;background:linear-gradient(#ffffff 5%,#e0dcf4 45%,#c4e0f4 90%)"></div><svg class="a" style="left:911px;top:776px" width="17" height="20" viewBox="0 0 17 20"><path d="M1 1H11L16 6V19H1Z" fill="#f4f4f4" stroke="#a8a8a8"/><path d="M11 1V6H16" fill="#e0e0e0" stroke="#a8a8a8"/><rect x="1" y="11" width="15" height="5" fill="#e04040"/><text x="8.5" y="15.3" font-size="4.5" font-family="Liberation Sans" font-weight="bold" fill="#fff" text-anchor="middle">PDF</text></svg><div class="t" style="left:944px;top:778px;font-size:14.3px;font-weight:bold">OCR</div><div class="a" style="left:1000px;top:756px;width:180px;height:59px;border:1px solid #7888b8;border-radius:2px;background:linear-gradient(#ffffff 5%,#e0dcf4 45%,#c4e0f4 90%)"></div><svg class="a" style="left:1006px;top:778px" width="15" height="15" viewBox="0 0 15 15"><path d="M3.3 3.3L11.7 11.7M11.7 3.3L3.3 11.7" stroke="#a82a2a" stroke-width="5.4" stroke-linecap="round"/><path d="M3.3 3.3L11.7 11.7M11.7 3.3L3.3 11.7" stroke="#fff" stroke-width="2.6" stroke-linecap="round"/></svg><div class="t" style="left:1079px;top:779px;font-size:13.2px;color:#101010">Fermer</div></div>
</div>
</div>
</body></html>
